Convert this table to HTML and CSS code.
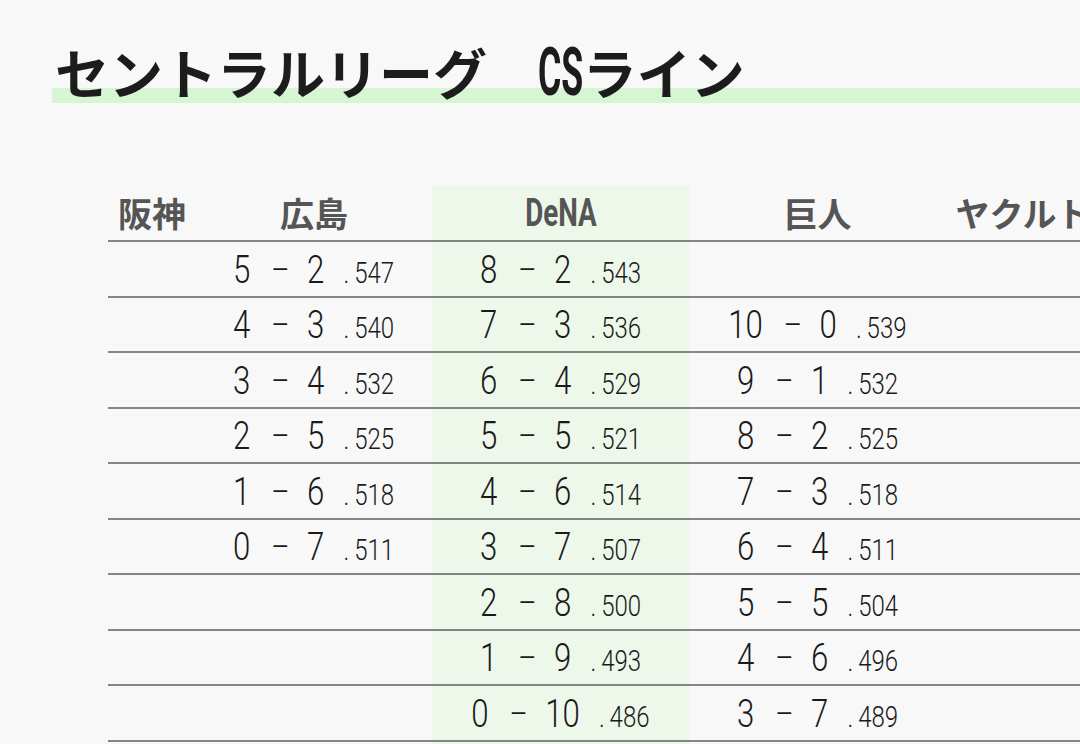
FILE: index.html
```html
<!DOCTYPE html>
<html lang="ja">
<head>
<meta charset="utf-8">
<title>セントラルリーグ CSライン</title>
<link rel="stylesheet" href="styles.css">
</head>
<body>
<main class="page">
  <h1 class="title">セントラルリーグ<span class="latin">CS</span>ライン</h1>
  <table class="cs">
    <colgroup>
      <col class="c1"><col class="c2"><col class="c3"><col class="c4"><col class="c5"><col class="c6">
    </colgroup>
    <thead>
      <tr><th>阪神</th><th>広島</th><th class="hl"><span class="hlatin">DeNA</span></th><th>巨人</th><th>ヤクルト</th><th></th></tr>
    </thead>
    <tbody>
      <tr><td></td><td><span class="s"><span class="n">5</span><span class="d">–</span><span class="n">2</span><span class="p"><span class="dot">.</span>547</span></span></td><td class="hl"><span class="s"><span class="n">8</span><span class="d">–</span><span class="n">2</span><span class="p"><span class="dot">.</span>543</span></span></td><td></td><td></td><td></td></tr>
      <tr><td></td><td><span class="s"><span class="n">4</span><span class="d">–</span><span class="n">3</span><span class="p"><span class="dot">.</span>540</span></span></td><td class="hl"><span class="s"><span class="n">7</span><span class="d">–</span><span class="n">3</span><span class="p"><span class="dot">.</span>536</span></span></td><td><span class="s"><span class="n">10</span><span class="d">–</span><span class="n">0</span><span class="p"><span class="dot">.</span>539</span></span></td><td></td><td></td></tr>
      <tr><td></td><td><span class="s"><span class="n">3</span><span class="d">–</span><span class="n">4</span><span class="p"><span class="dot">.</span>532</span></span></td><td class="hl"><span class="s"><span class="n">6</span><span class="d">–</span><span class="n">4</span><span class="p"><span class="dot">.</span>529</span></span></td><td><span class="s"><span class="n">9</span><span class="d">–</span><span class="n">1</span><span class="p"><span class="dot">.</span>532</span></span></td><td></td><td></td></tr>
      <tr><td></td><td><span class="s"><span class="n">2</span><span class="d">–</span><span class="n">5</span><span class="p"><span class="dot">.</span>525</span></span></td><td class="hl"><span class="s"><span class="n">5</span><span class="d">–</span><span class="n">5</span><span class="p"><span class="dot">.</span>521</span></span></td><td><span class="s"><span class="n">8</span><span class="d">–</span><span class="n">2</span><span class="p"><span class="dot">.</span>525</span></span></td><td></td><td></td></tr>
      <tr><td></td><td><span class="s"><span class="n">1</span><span class="d">–</span><span class="n">6</span><span class="p"><span class="dot">.</span>518</span></span></td><td class="hl"><span class="s"><span class="n">4</span><span class="d">–</span><span class="n">6</span><span class="p"><span class="dot">.</span>514</span></span></td><td><span class="s"><span class="n">7</span><span class="d">–</span><span class="n">3</span><span class="p"><span class="dot">.</span>518</span></span></td><td></td><td></td></tr>
      <tr><td></td><td><span class="s"><span class="n">0</span><span class="d">–</span><span class="n">7</span><span class="p"><span class="dot">.</span>511</span></span></td><td class="hl"><span class="s"><span class="n">3</span><span class="d">–</span><span class="n">7</span><span class="p"><span class="dot">.</span>507</span></span></td><td><span class="s"><span class="n">6</span><span class="d">–</span><span class="n">4</span><span class="p"><span class="dot">.</span>511</span></span></td><td></td><td></td></tr>
      <tr><td></td><td></td><td class="hl"><span class="s"><span class="n">2</span><span class="d">–</span><span class="n">8</span><span class="p"><span class="dot">.</span>500</span></span></td><td><span class="s"><span class="n">5</span><span class="d">–</span><span class="n">5</span><span class="p"><span class="dot">.</span>504</span></span></td><td></td><td></td></tr>
      <tr><td></td><td></td><td class="hl"><span class="s"><span class="n">1</span><span class="d">–</span><span class="n">9</span><span class="p"><span class="dot">.</span>493</span></span></td><td><span class="s"><span class="n">4</span><span class="d">–</span><span class="n">6</span><span class="p"><span class="dot">.</span>496</span></span></td><td></td><td></td></tr>
      <tr><td></td><td></td><td class="hl"><span class="s"><span class="n">0</span><span class="d">–</span><span class="n">10</span><span class="p"><span class="dot">.</span>486</span></span></td><td><span class="s"><span class="n">3</span><span class="d">–</span><span class="n">7</span><span class="p"><span class="dot">.</span>489</span></span></td><td></td><td></td></tr>
      <tr><td></td><td></td><td class="hl"></td><td></td><td></td><td></td></tr>
    </tbody>
  </table>
</main>
</body>
</html>
```

FILE: styles.css
```css
html, body {
  margin: 0;
  padding: 0;
  background: #f8f8f8;
  overflow: hidden;
  height: 100%;
}

.page {
  padding: 41px 0 0 52px;
  font-family: "Noto Sans CJK JP", sans-serif;
}

.title {
  margin: 0;
  padding-left: 3px;
  height: 62px;
  font-size: 54px;
  line-height: 62px;
  font-weight: 700;
  color: #1c1c1c;
  white-space: nowrap;
  background: linear-gradient(to bottom, transparent 47px, #d6f5d2 47px);
}

.latin {
  display: inline-block;
  font-family: Roboto, sans-serif;
  font-size: 66px;
  line-height: 0;
  font-weight: 700;
  transform: scaleX(0.54);
  transform-origin: left center;
  margin-left: 51px;
  margin-right: -39px;
}

.hlatin {
  display: inline-block;
  font-family: Roboto, sans-serif;
  font-size: 38px;
  font-weight: 700;
  transform: scaleX(0.73);
}

.cs {
  margin: 82px 0 0 56px;
  border-collapse: collapse;
  table-layout: fixed;
  width: 1100px;
}

.c1 { width: 88px; }
.c2 { width: 236px; }
.c3 { width: 257px; }
.c4 { width: 257px; }
.c5 { width: 154px; }
.c6 { width: 108px; }

.cs th {
  height: 55px;
  padding: 0;
  font-size: 34px;
  line-height: 40px;
  font-weight: 700;
  color: #555;
  text-align: center;
  vertical-align: middle;
  border-bottom: 2px solid #858585;
}

.cs td {
  height: 53.5px;
  padding: 0;
  text-align: center;
  vertical-align: middle;
  color: #1a1a1a;
  border-bottom: 2px solid #858585;
  white-space: nowrap;
  line-height: 20px;
}

.cs .hl {
  background: #edf8ea;
}

.s {
  display: inline-block;
  font-family: Roboto, sans-serif;
  font-weight: 300;
  transform: scaleX(0.8);
  line-height: 34px;
  padding-top: 10px;
}

.n {
  font-size: 39px;
}

.d {
  display: inline-block;
  font-size: 35px;
  margin: 0 22px 0 26px;
  position: relative;
  top: -1px;
}

.p {
  font-size: 30px;
  margin-left: 24px;
}

.dot {
  margin-right: 6px;
}
```
